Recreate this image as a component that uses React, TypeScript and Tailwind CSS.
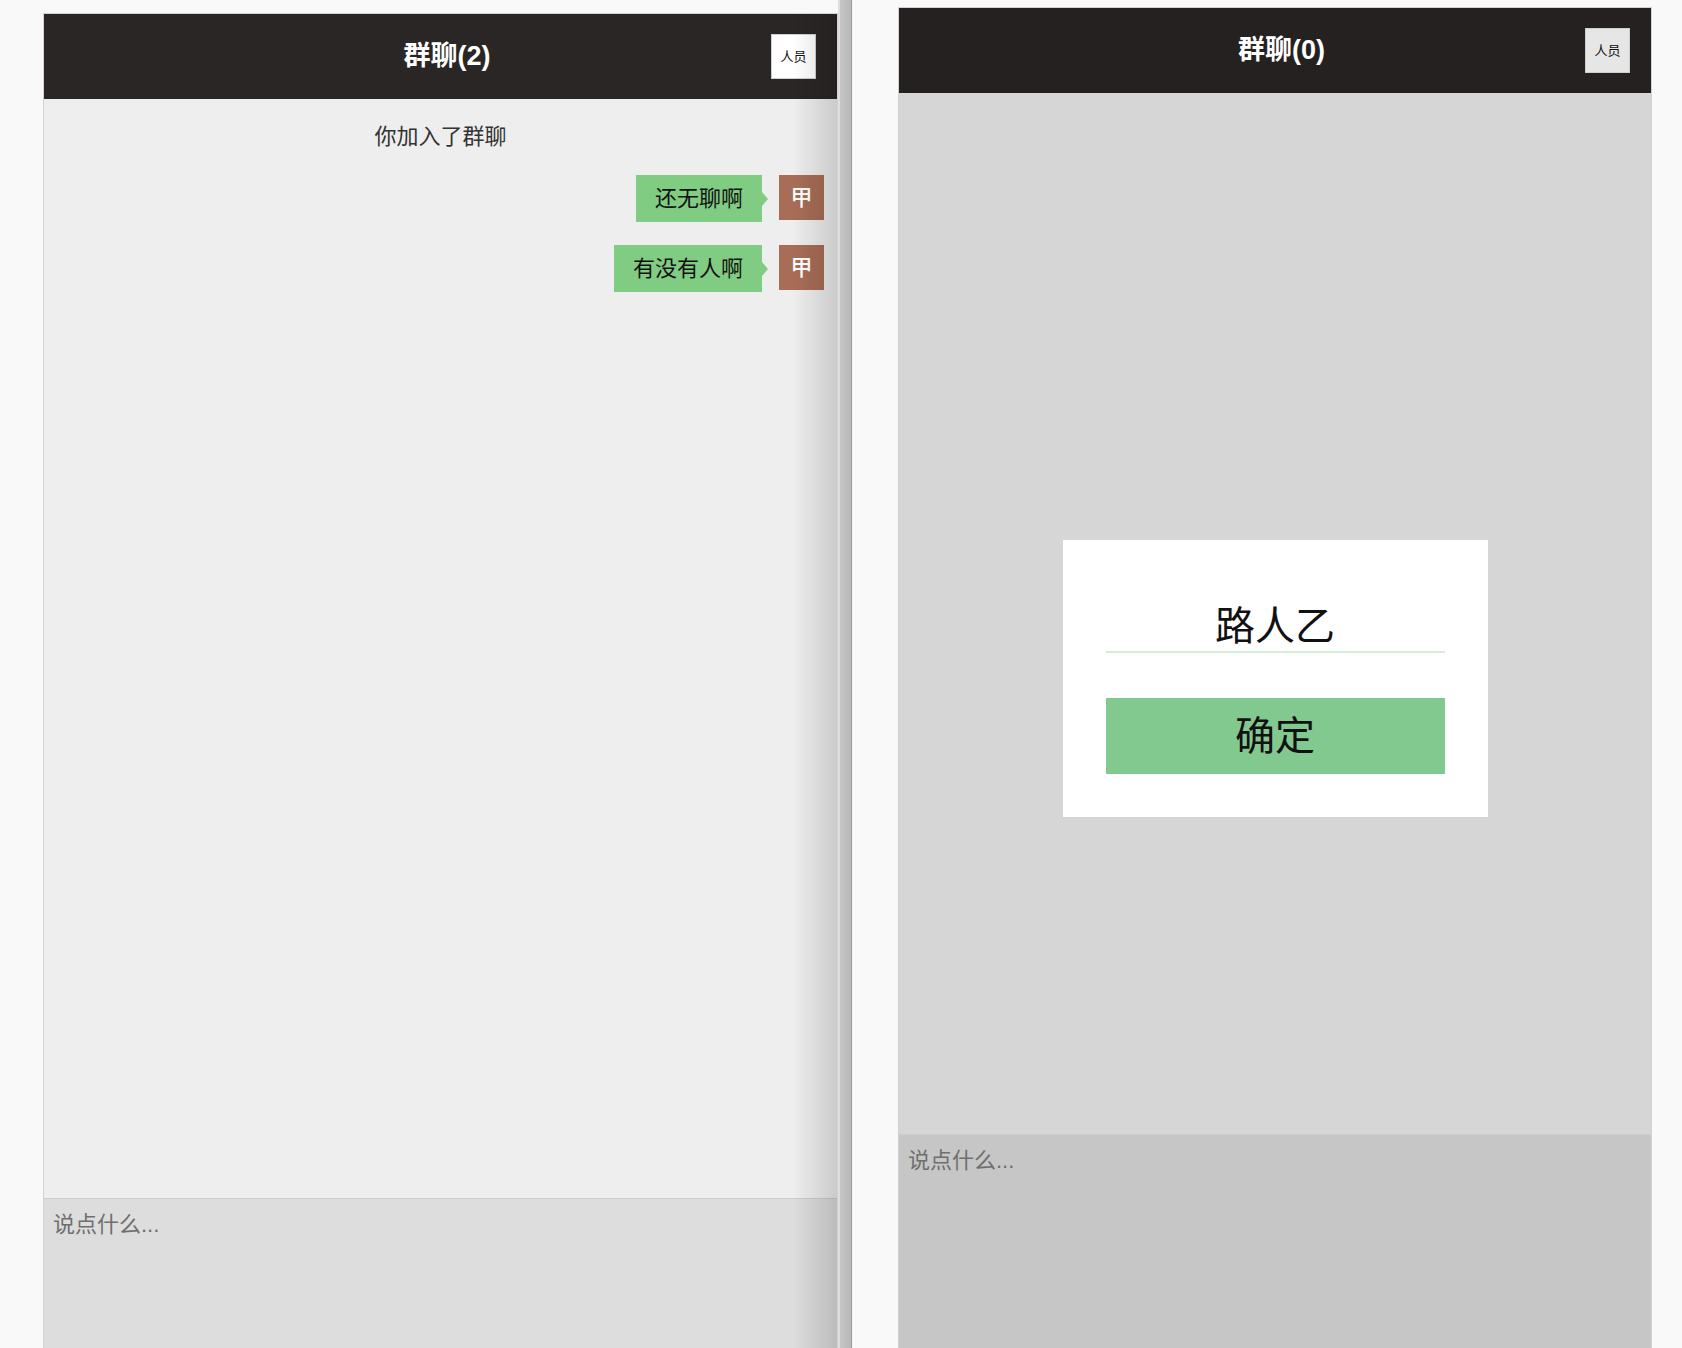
import React from "react";

const FONT = "font-['Liberation_Sans','Noto_Sans_CJK_SC',sans-serif]";

type Msg = { text: string; name: string };

function Bubble({ text, name }: Msg) {
  return (
    <div className="flex items-start justify-end pr-[13px]">
      <div className="flex items-center">
        <div className="bg-[#7fcc82] px-[19px] text-[22px] leading-[47px] text-[#111]">{text}</div>
        <div className="h-0 w-0 border-y-[7px] border-l-[6px] border-y-transparent border-l-[#7fcc82]" />
      </div>
      <div className="ml-[11px] flex h-[45px] w-[45px] items-center justify-center bg-[#a86d56] text-[22px] font-medium text-white">
        {name}
      </div>
    </div>
  );
}

function ChatWindow({
  title,
  messages,
  notice,
  bodyH,
  headerBg,
  btnBg,
  bodyBg,
  inputBg,
  shadow,
  children,
}: {
  title: string;
  messages: Msg[];
  notice?: string;
  bodyH: string;
  headerBg: string;
  btnBg: string;
  bodyBg: string;
  inputBg: string;
  shadow?: boolean;
  children?: React.ReactNode;
}) {
  return (
    <div className="relative flex flex-col border-x border-t border-[#d2d2d2]">
      {/* header */}
      <div className={`flex h-[85px] items-center ${headerBg}`}>
        <div className="flex-1" />
        <h1 className="pl-[34px] text-[27px] font-bold text-white">{title}</h1>
        <div className="flex flex-1 justify-end pr-[21px]">
          <button className={`h-[45px] w-[45px] border border-[#cfcfcf] text-[13px] text-[#111] ${btnBg}`}>
            人员
          </button>
        </div>
      </div>

      {/* messages */}
      <div className={`flex flex-col gap-[23px] ${bodyH} ${bodyBg}`}>
        {notice && (
          <p className="mt-[23px] text-center text-[22px] leading-[30px] text-[#333]">{notice}</p>
        )}
        {messages.map((m, i) => (
          <Bubble key={i} {...m} />
        ))}
      </div>

      {/* input */}
      <div className={`h-[214px] border-t border-[#cdcdcd] ${inputBg}`}>
        <textarea
          placeholder="说点什么..."
          className="h-full w-full resize-none px-[9px] pt-[11px] text-[22px] leading-[30px] outline-none placeholder:text-[#6f6f6f]"
        />
      </div>

      {shadow && (
        <div className="pointer-events-none absolute inset-y-0 right-0 w-[44px] bg-linear-to-r from-transparent to-black/15" />
      )}
      {children}
    </div>
  );
}

function NameDialog() {
  return (
    <div className="absolute inset-0 flex items-center justify-center">
      <div className="flex w-[425px] flex-col bg-white px-[43px] pb-[43px] pt-[58px]">
        <input
          readOnly
          value="路人乙"
          className="h-[55px] border-b-2 border-[#d4eed8] pt-[3px] text-center text-[40px] text-[#111] outline-none"
        />
        <button className="mt-[45px] h-[76px] bg-[#82c98f] text-[40px] text-[#111]">确定</button>
      </div>
    </div>
  );
}

export default function App() {
  return (
    <div className={`flex h-[1348px] w-[1682px] overflow-hidden bg-[#f9f9f9] ${FONT}`}>
      <div className="ml-[43px] mt-[13px] w-[795px] shrink-0">
        <ChatWindow
          title="群聊(2)"
          notice="你加入了群聊"
          messages={[
            { text: "还无聊啊", name: "甲" },
            { text: "有没有人啊", name: "甲" },
          ]}
          bodyH="h-[1099px]"
          headerBg="bg-[#2a2625]"
          btnBg="bg-white"
          bodyBg="bg-[#eeeeee]"
          inputBg="bg-[#dddddd]"
          shadow
        />
      </div>

      {/* divider between windows */}
      <div className="flex h-full w-[15px] shrink-0">
        <div className="w-[2px] bg-[#dedede]" />
        <div className="w-[11px] bg-linear-to-r from-[#c6c6c6] to-[#b8b8b8]" />
        <div className="w-[1px] bg-[#9c9c9c]" />
        <div className="w-[1px] bg-[#f3f3f3]" />
      </div>

      <div className="ml-[45px] mt-[7px] w-[754px] shrink-0">
        <ChatWindow
          title="群聊(0)"
          messages={[]}
          bodyH="h-[1041px]"
          headerBg="bg-[#252121]"
          btnBg="bg-[#e6e6e6]"
          bodyBg="bg-[#d6d6d6]"
          inputBg="bg-[#c6c6c6]"
        >
          <NameDialog />
        </ChatWindow>
      </div>
    </div>
  );
}
